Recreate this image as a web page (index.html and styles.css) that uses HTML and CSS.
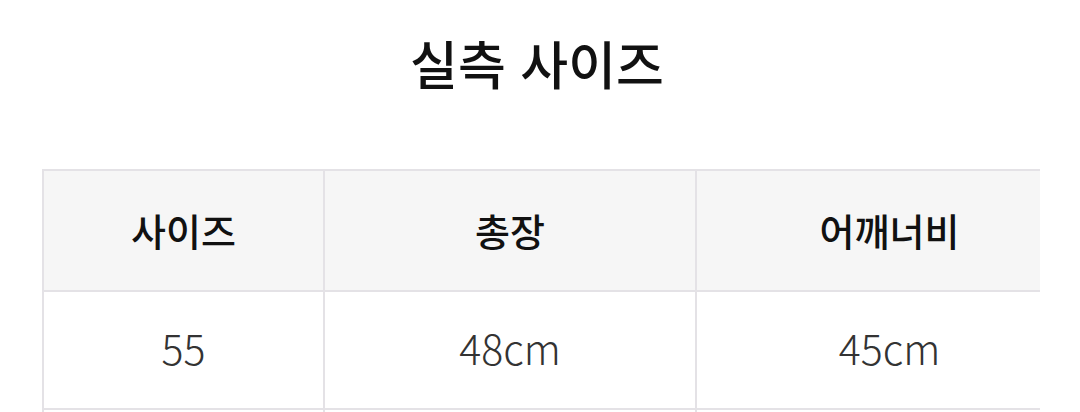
FILE: index.html
```html
<!DOCTYPE html>
<html lang="ko">
<head>
<meta charset="utf-8">
<link rel="stylesheet" href="styles.css">
</head>
<body>
<h1 class="title">실측 사이즈</h1>
<div class="table-wrap">
  <table class="size-table">
    <colgroup>
      <col class="c1"><col class="c2"><col class="c3">
    </colgroup>
    <thead>
      <tr><th>사이즈</th><th>총장</th><th>어깨너비</th></tr>
    </thead>
    <tbody>
      <tr><td>55</td><td>48cm</td><td>45cm</td></tr>
      <tr class="next"><td></td><td></td><td></td></tr>
    </tbody>
  </table>
</div>
</body>
</html>
```
FILE: styles.css
```css
html, body {
  margin: 0;
  padding: 0;
  background: #ffffff;
  font-family: "Noto Sans CJK KR", "Noto Sans", sans-serif;
  color: #111111;
  overflow: hidden;
}
.title {
  margin: 0;
  padding-top: 26px;
  padding-right: 6px;
  height: 169px;
  box-sizing: border-box;
  text-align: center;
  font-size: 52px;
  line-height: 74px;
  font-weight: 500;
  color: #111111;
}
.table-wrap {
  margin-left: 42px;
  width: 998px;
  overflow: hidden;
}
.size-table {
  width: 1040px;
  border-collapse: collapse;
  table-layout: fixed;
}
.c1 { width: 281px; }
.c2 { width: 372px; }
.c3 { width: 387px; }
.size-table th,
.size-table td {
  border: 2px solid #e4e2e6;
  text-align: center;
  padding: 0;
}
.size-table th {
  height: 117px;
  padding-bottom: 2px;
  background: #f6f6f6;
  font-size: 38px;
  font-weight: 500;
  color: #111111;
}
.size-table td {
  height: 110px;
  padding-bottom: 6px;
  font-size: 41px;
  font-weight: 300;
  color: #333333;
}
```
